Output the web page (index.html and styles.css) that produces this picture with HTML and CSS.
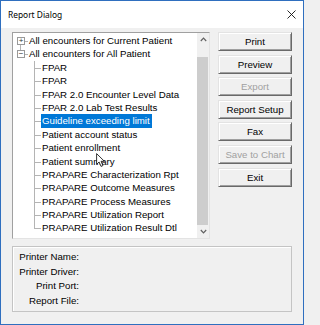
FILE: index.html
```html
<!DOCTYPE html>
<html>
<head>
<meta charset="utf-8">
<link rel="stylesheet" href="styles.css">
</head>
<body>
<div class="window">
  <div class="titlebar">
    <span class="title">Report Dialog</span>
    <svg class="close" width="9" height="9" viewBox="0 0 9 9"><path d="M0.5 0.5 L8.5 8.5 M8.5 0.5 L0.5 8.5" stroke="#111" stroke-width="0.9" fill="none"/></svg>
  </div>
  <div class="client">
    <div class="top">
      <div class="tree">
        <div class="tree-list">
          <div class="row root first"><span class="exp">+</span><span class="label">All encounters for Current Patient</span></div>
          <div class="row root"><span class="exp">−</span><span class="label">All encounters for All Patient</span></div>
          <div class="row child"><span class="label">FPAR</span></div>
          <div class="row child"><span class="label">FPAR</span></div>
          <div class="row child"><span class="label">FPAR 2.0 Encounter Level Data</span></div>
          <div class="row child"><span class="label">FPAR 2.0 Lab Test Results</span></div>
          <div class="row child"><span class="label selected">Guideline exceeding limit</span></div>
          <div class="row child"><span class="label">Patient account status</span></div>
          <div class="row child"><span class="label">Patient enrollment</span></div>
          <div class="row child"><span class="label">Patient summary</span></div>
          <div class="row child"><span class="label">PRAPARE Characterization Rpt</span></div>
          <div class="row child"><span class="label">PRAPARE Outcome Measures</span></div>
          <div class="row child"><span class="label">PRAPARE Process Measures</span></div>
          <div class="row child"><span class="label">PRAPARE Utilization Report</span></div>
          <div class="row child last"><span class="label">PRAPARE Utilization Result Dtl</span></div>
        </div>
        <div class="scrollbar">
          <div class="sb-arrow"><svg width="7" height="5" viewBox="0 0 7 5"><path d="M0.8 4 L3.5 1.2 L6.2 4" stroke="#606060" stroke-width="1.2" fill="none"/></svg></div>
          <div class="sb-track"><div class="sb-thumb"></div></div>
          <div class="sb-arrow"><svg width="7" height="5" viewBox="0 0 7 5"><path d="M0.8 1 L3.5 3.8 L6.2 1" stroke="#606060" stroke-width="1.2" fill="none"/></svg></div>
        </div>
      </div>
      <div class="buttons">
        <div class="btn">Print</div>
        <div class="btn">Preview</div>
        <div class="btn disabled">Export</div>
        <div class="btn">Report Setup</div>
        <div class="btn">Fax</div>
        <div class="btn disabled">Save to Chart</div>
        <div class="btn">Exit</div>
      </div>
    </div>
    <div class="info">
      <div class="info-row">Printer Name:</div>
      <div class="info-row">Printer Driver:</div>
      <div class="info-row">Print Port:</div>
      <div class="info-row">Report File:</div>
    </div>
  </div>
  <svg class="cursor" width="10" height="15" viewBox="0 0 10 15"><path d="M0.6 0.6 L0.6 11.4 L3.1 9 L5 13.4 L6.9 12.6 L5.1 8.3 L8.4 8.3 Z" fill="#fff" stroke="#000" stroke-width="0.8" stroke-linejoin="round"/></svg>
</div>
</body>
</html>
```

FILE: styles.css
```css
* { box-sizing: border-box; }
html, body { margin: 0; padding: 0; }
body { width: 304px; height: 325px; overflow: hidden; background: #f0f0f0; }

.window {
  position: relative;
  width: 304px;
  height: 325px;
  border: 1px solid #2f6fbf;
  background: #f0f0f0;
  font-family: "Liberation Sans", Arial, sans-serif;
  font-size: 9.7px;
  color: #000;
}

.titlebar {
  height: 27px;
  background: #fff;
  display: flex;
  align-items: center;
  justify-content: space-between;
  padding: 0 7px 0 7px;
}
.title {
  font-family: "Noto Sans", "Open Sans", sans-serif;
  font-size: 8.4px;
  color: #000;
}
.close { display: block; margin-top: -1px; }

.client {
  padding: 4px 11px 0 11px;
}

.top {
  display: flex;
  gap: 8px;
}

.tree {
  width: 198px;
  height: 207px;
  display: flex;
  background: #fff;
  border-top: 1px solid #a0a0a0;
  border-left: 1px solid #a0a0a0;
  border-right: 1px solid #e3e3e3;
  border-bottom: 1px solid #e3e3e3;
}
.tree-list {
  flex: 1;
  padding-top: 1px;
  overflow: hidden;
}
.row {
  position: relative;
  height: 13.4px;
  line-height: 13.4px;
  white-space: nowrap;
}
.label {
  display: inline-block;
  height: 13.4px;
  padding: 0 2px 0 1px;
}
.root .label { margin-left: 15px; }
.child .label { margin-left: 28px; }
.label.selected {
  background: #0078d7;
  color: #fff;
}

.exp {
  position: absolute;
  left: 4px;
  top: 3px;
  width: 8px;
  height: 8px;
  border: 1px solid #999;
  background: #fff;
  font-size: 8px;
  line-height: 5px;
  text-align: center;
  color: #333;
  z-index: 1;
}
.root::after {
  content: "";
  position: absolute;
  left: 12px;
  top: 7px;
  width: 3px;
  border-top: 1px solid #b4b4b4;
}
.root.first::before {
  content: "";
  position: absolute;
  left: 7px;
  top: 7px;
  height: 13.4px;
  border-left: 1px solid #b4b4b4;
}
.child::before {
  content: "";
  position: absolute;
  left: 21px;
  top: 0;
  height: 100%;
  border-left: 1px solid #b4b4b4;
}
.child.last::before { height: 7px; }
.child::after {
  content: "";
  position: absolute;
  left: 21px;
  top: 7px;
  width: 7px;
  border-top: 1px solid #b4b4b4;
}

.scrollbar {
  width: 12px;
  display: flex;
  flex-direction: column;
  background: #f0f0f0;
}
.sb-arrow {
  height: 13px;
  display: flex;
  align-items: center;
  justify-content: center;
}
.sb-track {
  flex: 1;
  padding-top: 11px;
}
.sb-thumb {
  height: 100%;
  margin-right: 1px;
  background: #cdcdcd;
}

.buttons {
  width: 74px;
  display: flex;
  flex-direction: column;
  gap: 3.6px;
}
.btn {
  height: 19px;
  line-height: 17px;
  text-align: center;
  background: #f0f0f0;
  border: 1px solid;
  border-color: #e3e3e3 #696969 #696969 #e3e3e3;
  box-shadow: inset 1px 1px #fff, inset -1px -1px #a0a0a0;
  white-space: nowrap;
}
.btn.disabled { color: #a0a0a0; }

.info {
  margin-top: 7px;
  height: 66px;
  border: 1px solid #c4c4c4;
  box-shadow: inset 1px 1px #fff;
  padding-top: 3px;
}
.info-row {
  width: 66px;
  height: 14.6px;
  line-height: 14.6px;
  text-align: right;
  white-space: nowrap;
}

.cursor {
  position: absolute;
  left: 95px;
  top: 152px;
}
```
